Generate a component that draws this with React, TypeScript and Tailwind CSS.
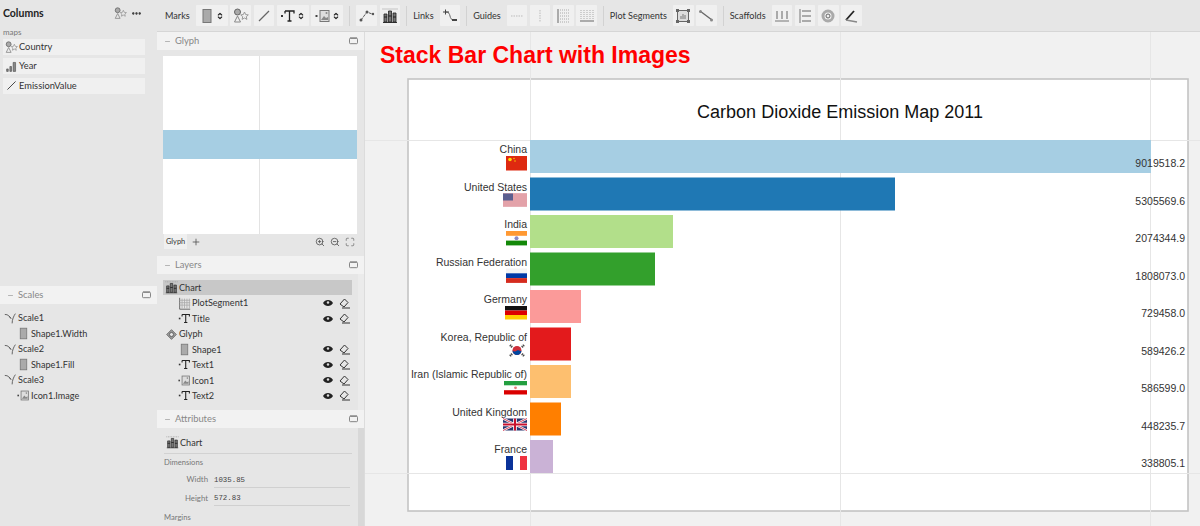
import { Plus, ZoomIn, ZoomOut, Maximize, Minus, ChevronsUpDown, Ellipsis } from "lucide-react";

const Svg = ({ children, size = 16 }: { children: React.ReactNode; size?: number }) => (
  <svg width={size} height={size} viewBox="0 0 16 16" fill="none" className="shrink-0">
    {children}
  </svg>
);

const RectIcon = () => (
  <Svg>
    <rect x="4" y="1.500" width="8" height="13" fill="#aaa" stroke="#777" />
  </Svg>
);
const TextIcon = () => (
  <Svg>
    <rect x="1" y="7" width="2" height="2" fill="#333" />
    <path d="M5 3h9v2.500M5 3v2.500M9.500 3v10M7.500 13h4" stroke="#222" strokeWidth="1.300" />
  </Svg>
);
const ImageIcon = () => (
  <Svg>
    <rect x="0.500" y="7" width="2" height="2" fill="#444" />
    <rect x="5" y="2.500" width="9" height="11" fill="#ddd" stroke="#777" />
    <path d="M6 12l3-4 2 2 2-1v3z" fill="#888" />
    <circle cx="11.500" cy="5" r="1" fill="#888" />
  </Svg>
);
const ChartIcon = () => (
  <Svg>
    <path d="M1 14.500h14" stroke="#333" />
    <path d="M2 14V6h3v8zM6.500 14V3h3v11zM11 14V5h3v9z" fill="#777" stroke="#222" strokeWidth="0.800" />
    <path d="M2 9h3M6.500 8h3M11 9h3" stroke="#222" />
    <path d="M0.500 1h15" stroke="#999" strokeDasharray="1 1" />
  </Svg>
);
const GridIcon = () => (
  <Svg>
    <path d="M2 1v14h13" stroke="#555" />
    <path d="M2 4h13M2 7h13M2 10h13M5 2v12M8 2v12M11 2v12M14 2v12" stroke="#aaa" />
  </Svg>
);
const GlyphIcon = () => (
  <Svg>
    <path d="M8 2l6 6-6 6-6-6z" fill="#999" stroke="#666" />
    <circle cx="8" cy="8" r="2.500" fill="#e5e5e5" stroke="#555" />
  </Svg>
);
const ScaleIcon = () => (
  <Svg>
    <path d="M1 3c4 0 6 2 7 5M14 2c-2 3-4 7-4 12M6 5l3 3" stroke="#555" strokeWidth="1.100" />
  </Svg>
);
const SymbolIcon = () => (
  <Svg>
    <circle cx="4.500" cy="4" r="3" fill="#aaa" stroke="#666" />
    <path d="M4.500 8l3 6h-6z" fill="none" stroke="#888" />
    <path d="M11.500 4l1.200 2.600 2.600.3-2 1.800.6 2.700-2.400-1.400-2.400 1.400.6-2.700-2-1.800 2.600-.3z" fill="none" stroke="#999" />
  </Svg>
);
const LineIcon = ({ color = "#666" }: { color?: string }) => (
  <Svg>
    <path d="M3 13L13 3" stroke={color} strokeWidth="1.200" />
  </Svg>
);
const BarsIcon = () => (
  <Svg>
    <path d="M2 11h2v3H2zM6 8h2v6H6zM10 3h3v11h-3z" fill="#888" stroke="#444" strokeWidth="0.700" />
  </Svg>
);
const EyeIcon = () => (
  <svg width="10" height="8" viewBox="0 0 10 8" className="shrink-0">
    <path d="M0 4c2-4 8-4 10 0-2 4-8 4-10 0z" fill="#222" />
    <circle cx="5" cy="3.500" r="1.200" fill="#ddd" />
  </svg>
);
const EraserIcon = () => (
  <svg width="11" height="11" viewBox="0 0 11 11" fill="none" className="shrink-0">
    <path d="M1 6l4.500-5L9 4.500 5 9z" stroke="#333" />
    <path d="M3 10h8" stroke="#333" />
  </svg>
);

const ToolButton = ({ children }: { children: React.ReactNode }) => (
  <div className="w-[20.500px] h-[21px] flex items-center justify-center bg-[#f0f0f0] rounded-[1px]">{children}</div>
);

const SelectButton = ({ children }: { children: React.ReactNode }) => (
  <div className="w-[32px] h-[21px] flex items-center justify-center gap-[1px] bg-[#f0f0f0] rounded-[1px]">
    {children}
    <ChevronsUpDown size={8} strokeWidth={3.500} color="#222" />
  </div>
);

const Divider = () => <div className="w-px h-[20px] bg-[#d2d2d2] mx-[6px]" />;
const Label = ({ children }: { children: React.ReactNode }) => (
  <span className="text-[9.100px] mr-[6px] text-[#333] whitespace-nowrap">{children}</span>
);
const Group = ({ children }: { children: React.ReactNode }) => <div className="flex gap-[2.700px]">{children}</div>;

function Toolbar() {
  return (
    <div className="h-[32px] shrink-0 flex items-center pl-[8px] bg-[#e6e6e6] border-b border-[#d6d6d6]">
      <Label>Marks</Label>
      <Group>
        <SelectButton><RectIcon /></SelectButton>
        <ToolButton><SymbolIcon /></ToolButton>
        <ToolButton><LineIcon /></ToolButton>
        <SelectButton><TextIcon /></SelectButton>
        <SelectButton><ImageIcon /></SelectButton>
      </Group>
      <Divider />
      <Group>
        <ToolButton>
          <Svg><path d="M2 12L8 4l5 2" stroke="#555" strokeDasharray="3 1" /><circle cx="2" cy="12" r="1.500" fill="#555" /><circle cx="8" cy="4" r="1.500" fill="#555" /><circle cx="14" cy="6" r="1.200" fill="#555" /></Svg>
        </ToolButton>
        <ToolButton><ChartIcon /></ToolButton>
      </Group>
      <Divider />
      <Label>Links</Label>
      <ToolButton>
        <Svg><path d="M4 4c6 0 2 8 8 8" stroke="#666" /><path d="M1 4h6M3.500 1.500v5" stroke="#444" /><path d="M10 12h5" stroke="#444" strokeWidth="2" /></Svg>
      </ToolButton>
      <Divider />
      <Label>Guides</Label>
      <Group>
        <ToolButton><Svg><path d="M2 8h12" stroke="#bbb" strokeDasharray="1.500 1" /></Svg></ToolButton>
        <ToolButton><Svg><path d="M8 2v12" stroke="#bbb" strokeDasharray="1.500 1" /></Svg></ToolButton>
        <ToolButton><Svg><path d="M3 1v14" stroke="#666" /><path d="M3 2h11M3 5h11M3 8h11M3 11h11M3 14h11" stroke="#aaa" strokeDasharray="1 1" /></Svg></ToolButton>
        <ToolButton><Svg><path d="M1 13h14" stroke="#666" /><path d="M2 2v11M5 2v11M8 2v11M11 2v11M14 2v11" stroke="#aaa" strokeDasharray="1 1" /></Svg></ToolButton>
      </Group>
      <Divider />
      <Label>Plot Segments</Label>
      <Group>
        <ToolButton>
          <Svg><rect x="2.500" y="2.500" width="11" height="11" fill="#ddd" stroke="#666" /><path d="M6 11V8M8 11V6M10 11V7" stroke="#999" strokeWidth="1.500" /><path d="M1 1h3v3H1zM12 1h3v3h-3zM1 12h3v3H1zM12 12h3v3h-3z" fill="#666" /></Svg>
        </ToolButton>
        <ToolButton><Svg><path d="M2 3l12 9" stroke="#666" strokeWidth="1.300" /><circle cx="2.500" cy="3.500" r="1.500" fill="#888" /><circle cx="13.500" cy="12" r="1.500" fill="#888" /></Svg></ToolButton>
      </Group>
      <Divider />
      <Label>Scaffolds</Label>
      <Group>
        <ToolButton><Svg><path d="M1 13h14" stroke="#777" /><path d="M3 3v8M8 3v8M13 3v8" stroke="#aaa" strokeWidth="2" /></Svg></ToolButton>
        <ToolButton><Svg><path d="M3 1v14" stroke="#777" /><path d="M5 3h9M5 8h9M5 13h9" stroke="#aaa" strokeWidth="2" /></Svg></ToolButton>
        <ToolButton><Svg><circle cx="8" cy="8" r="5" stroke="#aaa" strokeWidth="3" /><circle cx="8" cy="8" r="2" stroke="#666" /></Svg></ToolButton>
        <ToolButton><Svg><path d="M3 12L11 3" stroke="#222" strokeWidth="1.800" /><path d="M3 12l11 2" stroke="#888" strokeWidth="1.500" /></Svg></ToolButton>
      </Group>
    </div>
  );
}

const PanelHeader = ({ title }: { title: string }) => (
  <div className="h-[18px] shrink-0 bg-[#f2f2f2] flex items-center pl-[7px] pr-[6px] text-[9.400px] text-[#888]">
    <Minus size={7} color="#888" className="mr-[4px]" />
    <span className="flex-1">{title}</span>
    <svg width="9" height="8" viewBox="0 0 10 9" fill="none"><rect x="0.500" y="1.500" width="9" height="6" rx="1" stroke="#777" /><path d="M1 1h8" stroke="#777" /></svg>
  </div>
);

const SmallIcon = ({ children }: { children: React.ReactNode }) => (
  <span className="w-[16px] h-[13px] shrink-0 flex items-center justify-center [&_svg]:w-[13px] [&_svg]:h-[13px]">{children}</span>
);

const Column = ({ icon, name }: { icon: React.ReactNode; name: string }) => (
  <div className="h-[16px] flex items-center bg-[#f0f0f0] text-[9.300px] text-[#333] mb-[3.400px]">
    <SmallIcon>{icon}</SmallIcon>
    <span>{name}</span>
  </div>
);

const TreeRow = ({ icon, name, indent, actions, selected }: { icon: React.ReactNode; name: string; indent?: boolean; actions?: boolean; selected?: boolean }) => (
  <div className={`h-[15.450px] flex items-center text-[9.100px] text-[#333] ${selected ? "bg-[#c8c8c8]" : ""} ${indent ? "pl-[13px]" : "pl-[0px]"}`}>
    <SmallIcon>{icon}</SmallIcon>
    <span className="flex-1">{name}</span>
    {actions && (
      <span className="flex items-center gap-[6px] pr-[2px]">
        <EyeIcon />
        <EraserIcon />
      </span>
    )}
  </div>
);

const Field = ({ label, value }: { label: string; value: string }) => (
  <div className="h-[18.500px] flex items-center">
    <span className="w-[44px] text-right text-[7.800px] text-[#777]">{label}</span>
    <span className="ml-[6px] mr-[2px] flex-1 border-b border-[#d0d0d0] h-[15px] text-[7.400px] text-[#444] leading-[15px] font-['Liberation_Mono',monospace]">{value}</span>
  </div>
);

const bars = [
  { name: "China", w: 621, fill: "#a6cee3", value: "9019518.2" },
  { name: "United States", w: 365, fill: "#1f78b4", value: "5305569.6" },
  { name: "India", w: 143, fill: "#b2df8a", value: "2074344.9" },
  { name: "Russian Federation", w: 125, fill: "#33a02c", value: "1808073.0" },
  { name: "Germany", w: 51, fill: "#fb9a99", value: "729458.0" },
  { name: "Korea, Republic of", w: 41, fill: "#e31a1c", value: "589426.2" },
  { name: "Iran (Islamic Republic of)", w: 41, fill: "#fdbf6f", value: "586599.0" },
  { name: "United Kingdom", w: 31, fill: "#ff7f00", value: "448235.7" },
  { name: "France", w: 23, fill: "#cab2d6", value: "338805.1" },
];

// flags are drawn with the right edge at x=0, top at y=0
function Flag({ i }: { i: number }) {
  switch (i) {
    case 0:
      return (
        <g>
          <rect x="-21" y="0" width="21" height="14.500" fill="#de2910" />
          <circle cx="-17" cy="3.500" r="1.800" fill="#ffde00" />
          <circle cx="-13" cy="2.500" r="0.700" fill="#ffde00" />
          <circle cx="-12" cy="5" r="0.700" fill="#ffde00" />
        </g>
      );
    case 1:
      return (
        <g>
          <rect x="-24" y="0" width="24" height="13" fill="#ecc4c8" />
          {[0, 1, 2, 3, 4, 5, 6].map((s) => (
            <rect key={s} x="-24" y={s * 2} width="24" height="1" fill="#d9808a" />
          ))}
          <rect x="-24" y="0" width="10" height="7" fill="#5b5f8f" />
        </g>
      );
    case 2:
      return (
        <g>
          <rect x="-21" y="0" width="21" height="4.800" fill="#ff9933" />
          <rect x="-21" y="9.600" width="21" height="4.800" fill="#138808" />
          <circle cx="-10.500" cy="7.200" r="2" fill="#8a8ac8" />
        </g>
      );
    case 3:
      return (
        <g>
          <rect x="-21" y="0" width="21" height="4.800" fill="#f4f4f4" />
          <rect x="-21" y="4.800" width="21" height="4.800" fill="#0039a6" />
          <rect x="-21" y="9.600" width="21" height="4.800" fill="#d52b1e" />
        </g>
      );
    case 4:
      return (
        <g>
          <rect x="-22" y="0" width="22" height="4.500" fill="#111" />
          <rect x="-22" y="4.500" width="22" height="4.500" fill="#dd0000" />
          <rect x="-22" y="9" width="22" height="4.500" fill="#ffce00" />
        </g>
      );
    case 5:
      return (
        <g>
          <path d="M-17 1.500l2.500 2.500M-3 1.500l-2.500 2.500M-17 12.500l2.500-2.500M-3 12.500l-2.500-2.500" stroke="#444" strokeWidth="2.200" strokeDasharray="1.200 0.600" />
          <circle cx="-10" cy="7" r="4.500" fill="#cd2e3a" />
          <path d="M-14.500 7a4.500 4.500 0 0 0 9 0c-1.500 1.500-3-1-4.500 0s-3 1.500-4.500 0z" fill="#0047a0" />
        </g>
      );
    case 6:
      return (
        <g>
          <rect x="-23" y="0" width="23" height="4.300" fill="#239f40" />
          <rect x="-23" y="9.200" width="23" height="4.300" fill="#da0000" />
          <circle cx="-11.500" cy="6.800" r="1.400" fill="#e87a7a" />
        </g>
      );
    case 7:
      return (
        <g>
          <rect x="-24" y="0" width="24" height="12" fill="#27356f" />
          <path d="M-24 0L0 12M0 0L-24 12" stroke="#fff" strokeWidth="2.400" />
          <path d="M-24 0L0 12M0 0L-24 12" stroke="#c8102e" strokeWidth="0.800" />
          <path d="M-12 0v12M-24 6h24" stroke="#fff" strokeWidth="3.600" />
          <path d="M-12 0v12M-24 6h24" stroke="#c8102e" strokeWidth="2" />
        </g>
      );
    default:
      return (
        <g>
          <rect x="-21" y="0" width="7" height="14" fill="#0a3299" />
          <rect x="-7" y="0" width="7" height="14" fill="#ef3340" />
        </g>
      );
  }
}

function Canvas() {
  return (
    <svg width="835" height="494" viewBox="365 32 835 494" className="block">
      <rect x="365" y="32" width="835" height="494" fill="#f1f1f1" />
      <rect x="408" y="79" width="780" height="432" fill="#ffffff" stroke="#c4c4c4" strokeWidth="1.600" />
      <path d="M530.500 32V526M840.500 32V526M1150.500 32V526M365 140.500H1200M365 473.500H1200" stroke="#e6e6e6" />
      <text x="380" y="62.500" fontFamily="'Liberation Sans', Arial, sans-serif" fontSize="23" fontWeight="700" fill="#ff0000">
        Stack Bar Chart with Images
      </text>
      <text x="840" y="118" textAnchor="middle" fontFamily="'Liberation Sans', Arial, sans-serif" fontSize="18" fill="#111">
        Carbon Dioxide Emission Map 2011
      </text>
      {bars.map((b, i) => {
        const y = 140 + i * 37.5;
        return (
          <g key={b.name} fontFamily="'Liberation Sans', Arial, sans-serif" fontSize="10.500" fill="#333">
            <rect x="530" y={y} width={b.w} height="33" fill={b.fill} />
            <text x="527" y={y + 13} textAnchor="end">{b.name}</text>
            <text x="1185" y={y + 27} textAnchor="end">{b.value}</text>
            <g transform={`translate(527 ${y + 16})`}>
              <Flag i={i} />
            </g>
          </g>
        );
      })}
    </svg>
  );
}

export default function App() {
  return (
    <div className="w-[1200px] h-[526px] overflow-hidden flex bg-[#e6e6e6] font-['Lato','Open_Sans',sans-serif]">
      {/* Columns + scales */}
      <div className="w-[157px] shrink-0 flex flex-col">
        <div className="h-[286px] shrink-0 pl-[3px] pr-[12px]">
          <div className="h-[27px] flex items-center pr-[3px]">
            <span className="flex-1 text-[10.500px] font-bold text-[#222]">Columns</span>
            <SmallIcon><SymbolIcon /></SmallIcon>
            <Ellipsis size={11} color="#222" strokeWidth={3} className="ml-[3px]" />
          </div>
          <div className="text-[8px] text-[#777] h-[11px] leading-[11px] mb-[1px]">maps</div>
          <Column icon={<SymbolIcon />} name="Country" />
          <Column icon={<BarsIcon />} name="Year" />
          <Column icon={<LineIcon color="#444" />} name="EmissionValue" />
        </div>
        <PanelHeader title="Scales" />
        <div className="pt-[6.500px] pl-[2px] pr-[4px]">
          <TreeRow icon={<ScaleIcon />} name="Scale1" />
          <TreeRow icon={<RectIcon />} name="Shape1.Width" indent />
          <TreeRow icon={<ScaleIcon />} name="Scale2" />
          <TreeRow icon={<RectIcon />} name="Shape1.Fill" indent />
          <TreeRow icon={<ScaleIcon />} name="Scale3" />
          <TreeRow icon={<ImageIcon />} name="Icon1.Image" indent />
        </div>
      </div>

      <div className="flex-1 min-w-0 flex flex-col">
        <Toolbar />
        <div className="flex-1 min-h-0 flex">
          {/* Glyph, layers, attributes */}
          <div className="w-[208px] shrink-0 flex flex-col border-r-[1px] border-[#dcdcdc]">
            <PanelHeader title="Glyph" />
            <div className="pl-[6px] pt-[6px]">
              <div className="w-[194px] h-[178px] bg-white relative flex flex-col justify-center">
                <div className="absolute left-[96px] top-0 bottom-0 w-px bg-[#e3e3e3]" />
                <div className="h-[29px] bg-[#a6cee3] relative mt-[-1px]" />
              </div>
              <div className="w-[194px] h-[15px] flex items-center text-[7.400px] text-[#333]">
                <span className="bg-[#f0f0f0] h-full px-[2px] leading-[15px] ml-[1px]">Glyph</span>
                <Plus size={10} color="#555" className="ml-[4px]" />
                <span className="flex-1" />
                <span className="flex gap-[5px] pr-[2px]">
                  <ZoomIn size={10} color="#555" />
                  <ZoomOut size={10} color="#555" />
                  <Maximize size={10} color="#777" />
                </span>
              </div>
            </div>
            <div className="h-[7px]" />
            <PanelHeader title="Layers" />
            <div className="pt-[6px] pl-[6px] pr-[6px] h-[136px] shrink-0 border-r-[6px] border-[#ebebeb]">
              <TreeRow icon={<ChartIcon />} name="Chart" selected />
              <TreeRow icon={<GridIcon />} name="PlotSegment1" indent actions />
              <TreeRow icon={<TextIcon />} name="Title" indent actions />
              <TreeRow icon={<GlyphIcon />} name="Glyph" />
              <TreeRow icon={<RectIcon />} name="Shape1" indent actions />
              <TreeRow icon={<TextIcon />} name="Text1" indent actions />
              <TreeRow icon={<ImageIcon />} name="Icon1" indent actions />
              <TreeRow icon={<TextIcon />} name="Text2" indent actions />
            </div>
            <PanelHeader title="Attributes" />
            <div className="pl-[7px] pr-[6px] pt-[4px] flex-1 border-r-[6px] border-[#d8d8d8]">
              <div className="h-[22px] flex items-center text-[9.100px] text-[#333] border-b border-[#d2d2d2]">
                <SmallIcon><ChartIcon /></SmallIcon> Chart
              </div>
              <div className="text-[7.600px] text-[#777] mt-[2px] h-[13px] leading-[13px] mb-[2px]">Dimensions</div>
              <Field label="Width" value="1035.85" />
              <Field label="Height" value="572.83" />
              <div className="text-[7.600px] text-[#777] mt-[3px] h-[13px] leading-[13px]">Margins</div>
            </div>
          </div>
          <div className="flex-1 min-w-0 overflow-hidden">
            <Canvas />
          </div>
        </div>
      </div>
    </div>
  );
}
